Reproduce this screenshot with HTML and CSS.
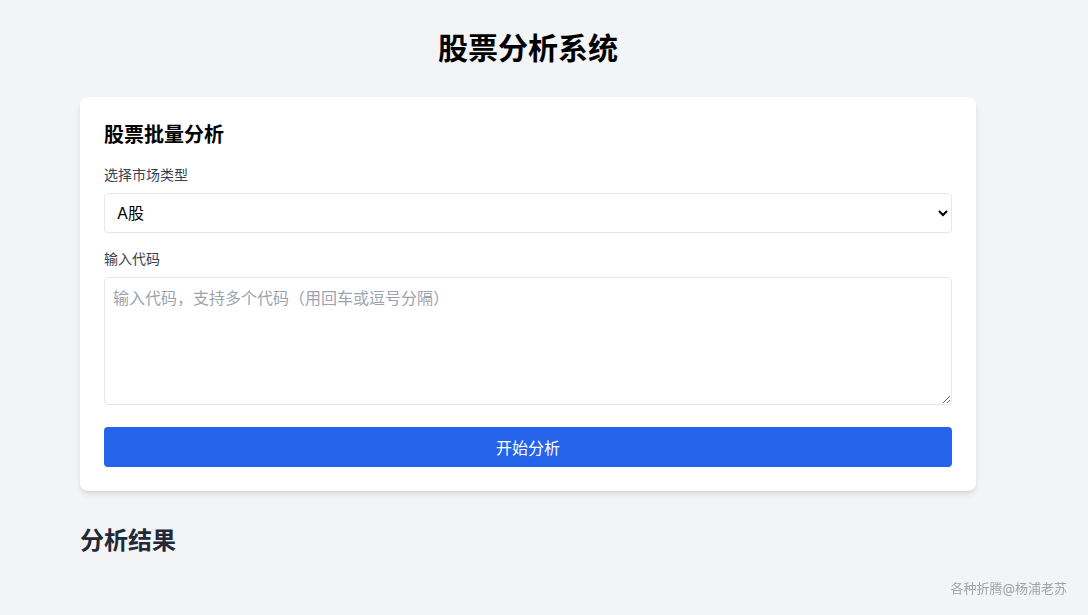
FILE: index.html
```html
<!DOCTYPE html>
<html lang="zh-CN">
<head>
<meta charset="utf-8">
<title>股票分析系统</title>
<link rel="stylesheet" href="styles.css">
</head>
<body>
<main class="page">
  <div class="container">
    <h1 class="title">股票分析系统</h1>
    <section class="card">
      <h2 class="card-title">股票批量分析</h2>
      <div class="field">
        <label class="label" for="market">选择市场类型</label>
        <select id="market" class="select">
          <option>A股</option>
          <option>港股</option>
          <option>美股</option>
        </select>
      </div>
      <div class="field">
        <label class="label" for="codes">输入代码</label>
        <textarea id="codes" class="textarea" placeholder="输入代码，支持多个代码（用回车或逗号分隔）"></textarea>
      </div>
      <button class="btn" type="button">开始分析</button>
    </section>
    <h2 class="results-title">分析结果</h2>
  </div>
</main>
<div class="footer">各种折腾@杨浦老苏</div>
</body>
</html>
```

FILE: styles.css
```css
* { box-sizing: border-box; }
html, body { margin: 0; padding: 0; }
body {
  background: #f3f4f6;
  font-family: Inter, "Noto Sans", "Noto Sans CJK SC", sans-serif;
  color: #1f2937;
  min-height: 615px;
}
.page {
  padding: 30px 32px 0 0;
}
.container {
  max-width: 896px;
  margin: 0 auto;
}
.title {
  margin: 0 0 31px;
  text-align: center;
  font-size: 30px;
  line-height: 36px;
  font-weight: 700;
  color: #000;
}
.card {
  background: #fff;
  border-radius: 8px;
  box-shadow: 0 4px 6px -1px rgba(0,0,0,0.1), 0 2px 4px -2px rgba(0,0,0,0.1);
  padding: 24px;
}
.card-title {
  margin: 0 0 16px;
  font-size: 20px;
  line-height: 28px;
  font-weight: 700;
  color: #000;
}
.field { margin-bottom: 16px; }
.field + .field { margin-bottom: 22px; }
.label {
  display: block;
  font-size: 14px;
  line-height: 20px;
  color: #374151;
  margin-bottom: 8px;
}
.select {
  display: block;
  width: 100%;
  height: 40px;
  padding: 0 8px;
  border: 1px solid #e5e7eb;
  border-radius: 4px;
  background: #fff;
  font-family: inherit;
  font-size: 16px;
  color: #000;
}
.textarea {
  display: block;
  width: 100%;
  height: 128px;
  padding: 8px;
  border: 1px solid #e5e7eb;
  border-radius: 4px;
  background: #fff;
  font-family: inherit;
  font-size: 16px;
  line-height: 24px;
  color: #000;
  resize: vertical;
}
.textarea::placeholder { color: #9ca3af; }
.btn {
  display: block;
  width: 100%;
  height: 40px;
  border: 0;
  border-radius: 4px;
  background: #2563eb;
  color: #fff;
  font-family: inherit;
  font-size: 16px;
}
.results-title {
  margin: 34px 0 0;
  font-size: 24px;
  line-height: 32px;
  font-weight: 700;
  color: #1f2937;
}
.footer {
  position: fixed;
  right: 21px;
  bottom: 18px;
  font-size: 13px;
  line-height: 18px;
  color: #a3a3a3;
}
```
